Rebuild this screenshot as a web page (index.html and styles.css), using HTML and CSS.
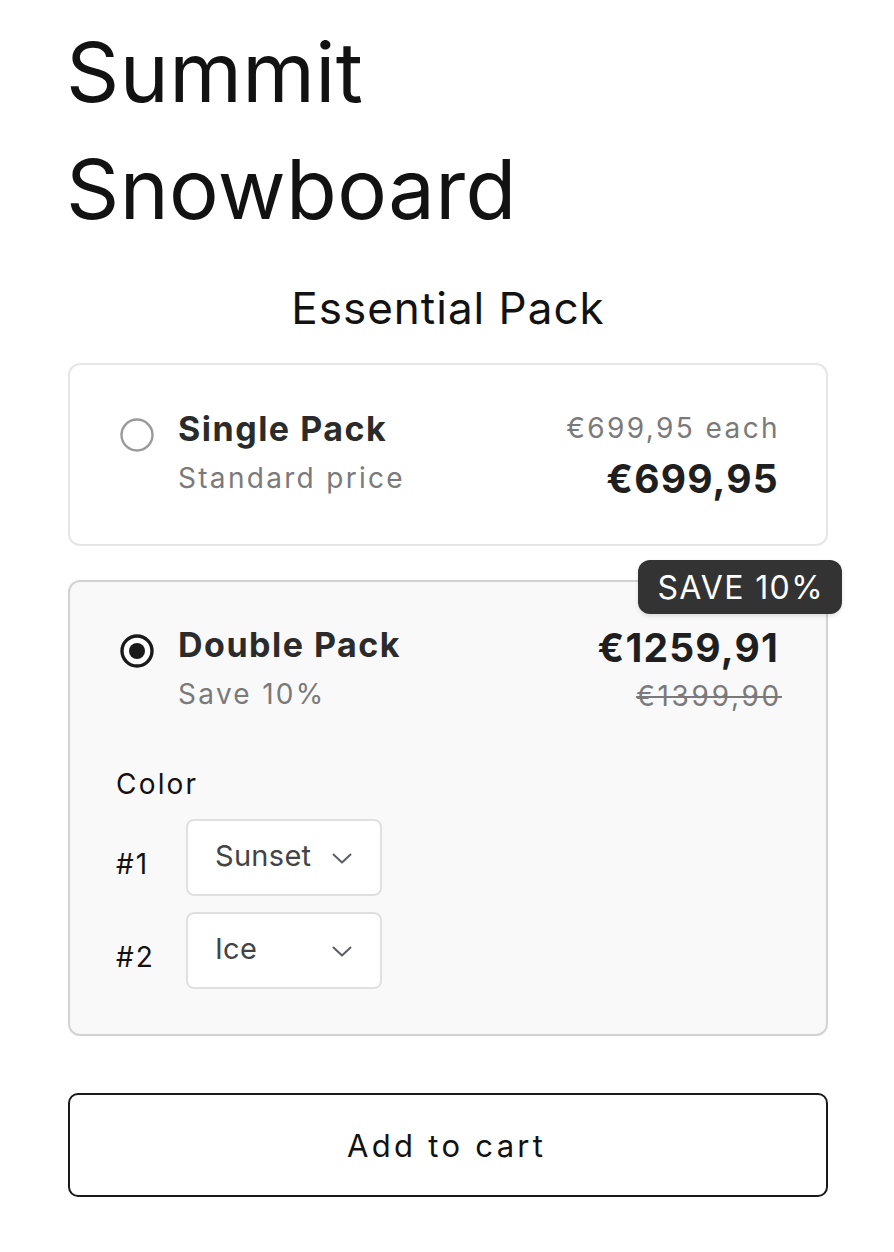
FILE: index.html
```html
<!DOCTYPE html>
<html lang="en">
<head>
<meta charset="utf-8">
<title>Summit Snowboard</title>
<link rel="stylesheet" href="styles.css">
</head>
<body>
<main class="page">
  <h1 class="title">Summit<br>Snowboard</h1>
  <h2 class="bundle-heading">Essential Pack</h2>

  <div class="options">
    <div class="option option-single">
      <div class="option-row">
        <div class="option-main">
          <span class="radio">
            <svg viewBox="0 0 34 34" width="34" height="34"><circle cx="17" cy="17" r="15.5" fill="#fff" stroke="#9a9a9a" stroke-width="2.4"/></svg>
          </span>
          <div class="option-text">
            <div class="option-name">Single Pack</div>
            <div class="option-note">Standard price</div>
          </div>
        </div>
        <div class="option-prices">
          <div class="price-each">€699,95 each</div>
          <div class="price">€699,95</div>
        </div>
      </div>
    </div>

    <div class="option option-selected">
      <span class="badge">SAVE 10%</span>
      <div class="option-row">
        <div class="option-main">
          <span class="radio">
            <svg viewBox="0 0 34 34" width="34" height="34"><circle cx="17" cy="17" r="15" fill="#fff" stroke="#1a1a1a" stroke-width="3.4"/><circle cx="17" cy="17" r="8" fill="#1a1a1a"/></svg>
          </span>
          <div class="option-text">
            <div class="option-name">Double Pack</div>
            <div class="option-note">Save 10%</div>
          </div>
        </div>
        <div class="option-prices">
          <div class="price">€1259,91</div>
          <div class="price-compare">€1399,90</div>
        </div>
      </div>

      <div class="variants">
        <div class="variants-label">Color</div>
        <div class="variant-row">
          <span class="variant-index">#1</span>
          <div class="select">
            <span class="select-value">Sunset</span>
            <svg class="chevron" viewBox="0 0 20 11" width="20" height="11"><path d="M1.5 1.5 L10 9.5 L18.5 1.5" fill="none" stroke="#5a5f66" stroke-width="2" stroke-linecap="round" stroke-linejoin="round"/></svg>
          </div>
        </div>
        <div class="variant-row">
          <span class="variant-index">#2</span>
          <div class="select">
            <span class="select-value">Ice</span>
            <svg class="chevron" viewBox="0 0 20 11" width="20" height="11"><path d="M1.5 1.5 L10 9.5 L18.5 1.5" fill="none" stroke="#5a5f66" stroke-width="2" stroke-linecap="round" stroke-linejoin="round"/></svg>
          </div>
        </div>
      </div>
    </div>
  </div>

  <button class="add-to-cart" type="button">Add to cart</button>
</main>
</body>
</html>
```

FILE: styles.css
```css
* { box-sizing: border-box; }

html, body {
  margin: 0;
  padding: 0;
  background: #ffffff;
}

body {
  font-family: Inter, "Noto Sans", "Liberation Sans", sans-serif;
  color: #121212;
}

.page {
  padding: 0 66px 40px 68px;
}

.title {
  margin: 14px 0 0 -2px;
  font-size: 83px;
  line-height: 117px;
  font-weight: 400;
  letter-spacing: 0.4px;
  color: #121212;
}

.bundle-heading {
  margin: 30px 0 0 0;
  text-align: center;
  font-size: 44px;
  line-height: 60px;
  font-weight: 400;
  letter-spacing: 1px;
  color: #121212;
}

.options {
  margin-top: 25px;
  display: flex;
  flex-direction: column;
  gap: 34px;
}

.option {
  position: relative;
  border: 2px solid #e6e6e6;
  border-radius: 12px;
  background: #ffffff;
  padding: 41px 48px 36px 46px;
}

.option-selected {
  background: #f9f9f9;
  border-color: #d2d2d2;
  padding-top: 40px;
  padding-bottom: 45px;
}

.option-row {
  display: flex;
  justify-content: space-between;
  align-items: flex-start;
}

.option-main {
  display: flex;
  align-items: flex-start;
  gap: 24px;
}

.radio {
  display: block;
  width: 34px;
  height: 34px;
  margin: 12px 0 0 4px;
}

.radio svg { display: block; }

.option-name {
  font-size: 34px;
  line-height: 46px;
  font-weight: 700;
  color: #2b2b2b;
  letter-spacing: 1.5px;
}

.option-note {
  font-size: 28px;
  line-height: 46px;
  margin-top: 3px;
  color: #7a7a7a;
  letter-spacing: 2.3px;
}

.option-prices {
  text-align: right;
}

.price-each {
  font-size: 28px;
  line-height: 44px;
  color: #7a7a7a;
  letter-spacing: 2.4px;
  margin-right: -2px;
}

.price {
  font-size: 39px;
  line-height: 58px;
  font-weight: 700;
  color: #1f1f1f;
  letter-spacing: 1.2px;
  margin-right: -1px;
}

.option-selected .price {
  line-height: 52px;
}

.price-compare {
  font-size: 28px;
  line-height: 44px;
  color: #7a7a7a;
  text-decoration: line-through;
  letter-spacing: 2.7px;
  margin-right: -4px;
}

.badge {
  position: absolute;
  top: -22px;
  right: -16px;
  background: #333333;
  color: #ffffff;
  border-radius: 12px;
  padding: 0 18px 0 19px;
  height: 54px;
  display: flex;
  align-items: center;
  font-size: 32px;
  letter-spacing: 1.4px;
  box-shadow: 0 2px 4px rgba(0, 0, 0, 0.12);
}

.variants {
  margin-top: 46px;
}

.variants-label {
  font-size: 28px;
  line-height: 40px;
  color: #121212;
  letter-spacing: 2.2px;
  margin-bottom: 15px;
}

.variant-row {
  display: flex;
  align-items: center;
}

.variant-row + .variant-row {
  margin-top: 16px;
}

.variant-index {
  width: 70px;
  font-size: 28px;
  padding-top: 12px;
  color: #121212;
  letter-spacing: 2px;
}

.select {
  width: 196px;
  height: 77px;
  background: #ffffff;
  border: 2px solid #e0e0e0;
  border-radius: 8px;
  display: flex;
  align-items: center;
  justify-content: space-between;
  padding: 0 28px 0 27px;
}

.select-value {
  font-size: 29px;
  color: #444444;
  margin-top: -4px;
  letter-spacing: 0.3px;
}

.chevron {
  display: block;
  margin-top: 2px;
}

.add-to-cart {
  display: block;
  width: 100%;
  margin-top: 57px;
  height: 104px;
  background: #ffffff;
  border: 2.5px solid #1a1a1a;
  border-radius: 10px;
  font-family: Inter, "Noto Sans", "Liberation Sans", sans-serif;
  font-size: 31px;
  letter-spacing: 3.3px;
  padding-left: 3.3px;
  color: #121212;
  cursor: pointer;
}
```
